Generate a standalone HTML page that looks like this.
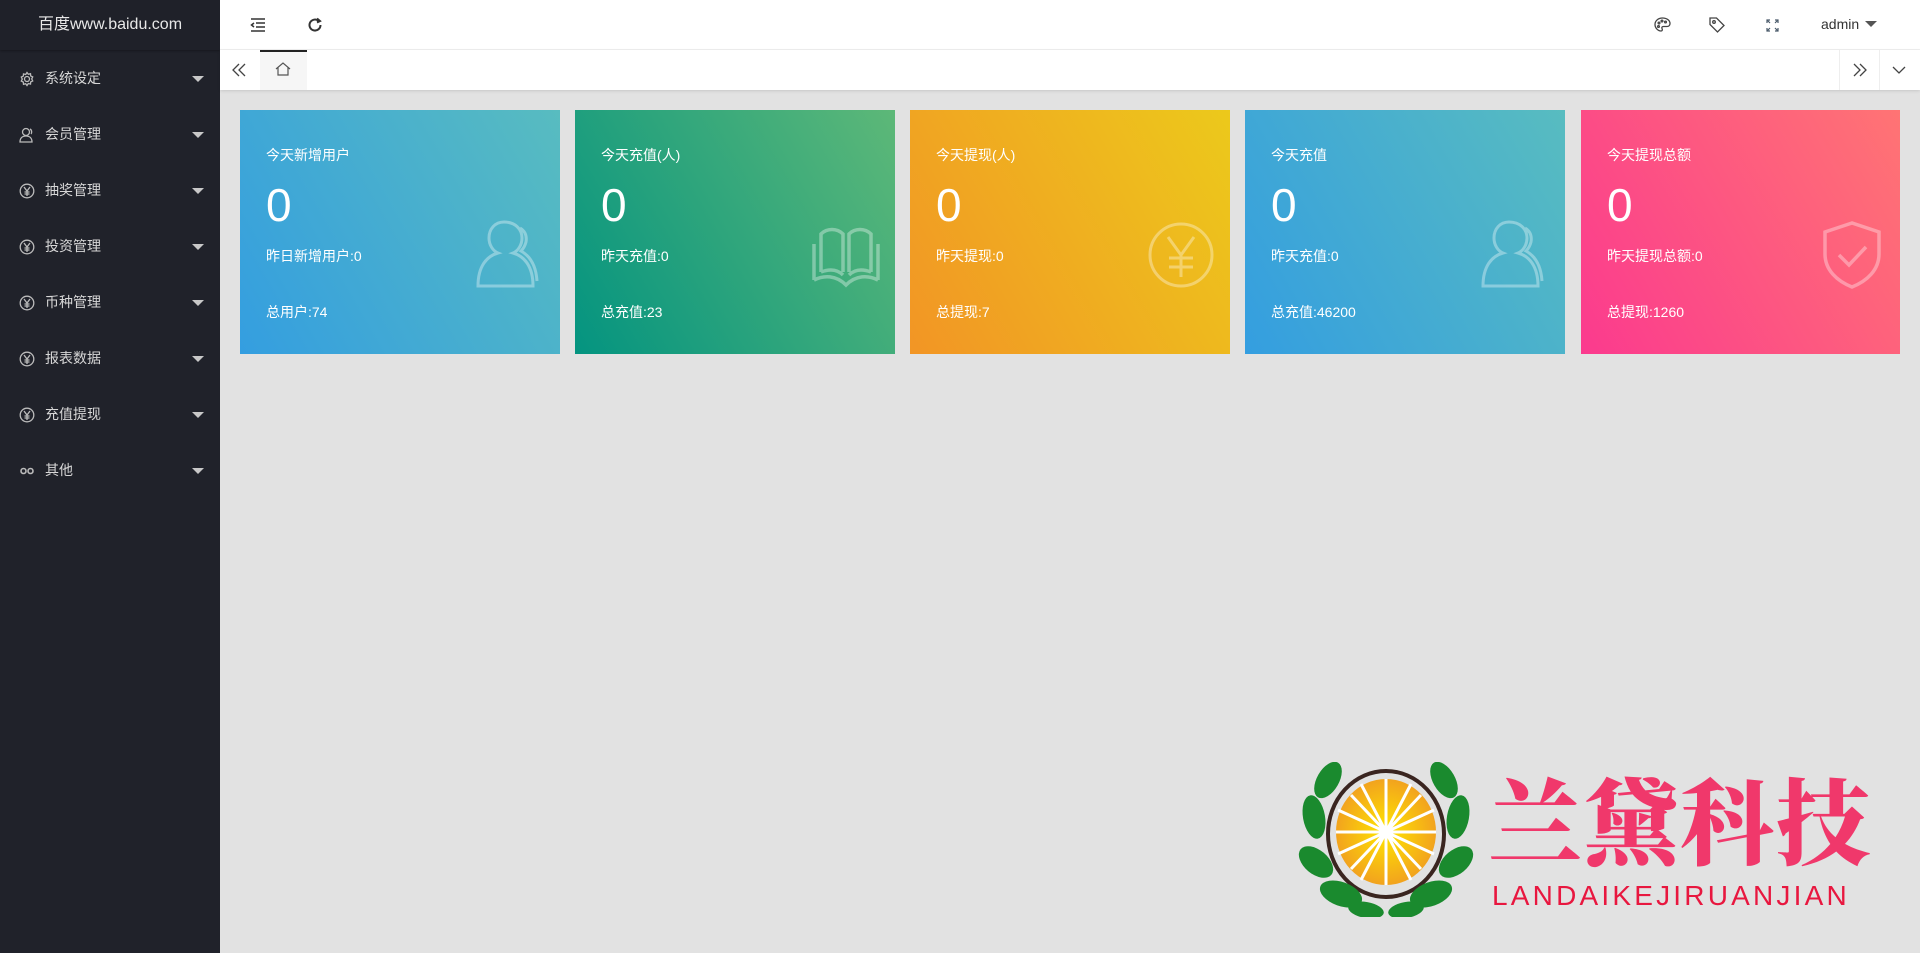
<!DOCTYPE html>
<html><head><meta charset="utf-8"><style>
*{margin:0;padding:0;box-sizing:border-box}
body{width:1920px;height:953px;overflow:hidden;background:#e2e2e2;font-family:"Liberation Sans","Noto Sans CJK SC",sans-serif;position:relative}
.side{position:absolute;left:0;top:0;width:220px;height:953px;background:#20222a}
.logo{height:50px;line-height:50px;text-align:center;color:#e8e8e8;font-size:16px;background:#1f2129;box-shadow:0 1px 2px rgba(0,0,0,.3)}
.menu{position:absolute;top:50px;left:0;width:220px}
.mi{height:56px;line-height:56px;color:#d7d7d7;font-size:14px;padding-left:45px;position:relative}
.mi svg{position:absolute;left:19px;top:21px}
.mi:after{content:"";position:absolute;right:16px;top:26px;border:6px solid transparent;border-top:6px solid #c8c8c8}
.head{position:absolute;left:220px;top:0;right:0;height:50px;background:#fff;border-bottom:1px solid #f0f0f0}
.tabs{position:absolute;left:220px;top:50px;right:0;height:40px;background:#fff;box-shadow:0 1px 3px rgba(0,0,0,.12)}
.card{position:absolute;top:110px;width:320px;height:244px;color:#fff;padding-left:26px}
.card .t{position:absolute;top:35px;font-size:14px}
.card .n{position:absolute;top:68px;font-size:46px}
.card .y{position:absolute;top:136px;font-size:14px}
.card .z{position:absolute;top:192px;font-size:14px}
.card svg{position:absolute;left:236px;top:110px}
</style></head><body>
<div class="side">
<div class="logo">百度www.baidu.com</div>
<div class="menu">
<div class="mi"><svg width="16" height="16" viewBox="0 0 16 16" fill="none" stroke="#bbb" stroke-width="1.3"><circle cx="8" cy="8" r="2.5"/><path d="M8 1.5l1.3 1.8 2.2-.6.2 2.2 2 1-1 2 1 2-2 1-.2 2.2-2.2-.6L8 14.5l-1.3-1.8-2.2.6-.2-2.2-2-1 1-2-1-2 2-1 .2-2.2 2.2.6z"/></svg>系统设定</div>
<div class="mi"><svg width="16" height="16" viewBox="0 0 16 16" fill="none" stroke="#bbb" stroke-width="1.3"><circle cx="7" cy="5" r="3.5"/><path d="M1 15c0-4 2.5-6 6-6s6 2 6 6z M11 2c2 1 2 4 1 5"/></svg>会员管理</div>
<div class="mi"><svg width="16" height="16" viewBox="0 0 16 16" fill="none" stroke="#bbb" stroke-width="1.3"><circle cx="8" cy="8" r="6.8"/><path d="M5 4l3 4 3-4M8 8v5M5.5 9h5M5.5 11h5"/></svg>抽奖管理</div>
<div class="mi"><svg width="16" height="16" viewBox="0 0 16 16" fill="none" stroke="#bbb" stroke-width="1.3"><circle cx="8" cy="8" r="6.8"/><path d="M5 4l3 4 3-4M8 8v5M5.5 9h5M5.5 11h5"/></svg>投资管理</div>
<div class="mi"><svg width="16" height="16" viewBox="0 0 16 16" fill="none" stroke="#bbb" stroke-width="1.3"><circle cx="8" cy="8" r="6.8"/><path d="M5 4l3 4 3-4M8 8v5M5.5 9h5M5.5 11h5"/></svg>币种管理</div>
<div class="mi"><svg width="16" height="16" viewBox="0 0 16 16" fill="none" stroke="#bbb" stroke-width="1.3"><circle cx="8" cy="8" r="6.8"/><path d="M5 4l3 4 3-4M8 8v5M5.5 9h5M5.5 11h5"/></svg>报表数据</div>
<div class="mi"><svg width="16" height="16" viewBox="0 0 16 16" fill="none" stroke="#bbb" stroke-width="1.3"><circle cx="8" cy="8" r="6.8"/><path d="M5 4l3 4 3-4M8 8v5M5.5 9h5M5.5 11h5"/></svg>充值提现</div>
<div class="mi"><svg width="16" height="16" viewBox="0 0 16 16" fill="none" stroke="#bbb" stroke-width="1.6"><circle cx="4.5" cy="8" r="2.5"/><circle cx="11.5" cy="8" r="2.5"/></svg>其他</div>
</div></div>
<div class="head">
<svg style="position:absolute;left:30px;top:18px" width="16" height="14" viewBox="0 0 16 14" fill="none" stroke="#333" stroke-width="1.5"><path d="M1 1h14M6 5h9M6 9h9M1 13h14M4 5L1.5 7 4 9"/></svg>
<svg style="position:absolute;left:87px;top:17px" width="16" height="16" viewBox="0 0 16 16" fill="none" stroke="#333" stroke-width="2"><path d="M13.5 8A5.5 5.5 0 1 1 11.5 3.8"/><path d="M10 1.5l3 2.5-3 1.5" fill="#333"/></svg>
<svg style="position:absolute;left:1434px;top:17px" width="17" height="15" viewBox="0 0 17 15" fill="none" stroke="#444" stroke-width="1.3"><path d="M8.5 1C4 1 1 4 1 7.5S4 14 7 14c1.5 0 1.5-1.5 1-2.5s0-2 1.5-2H13c2 0 3-1.5 3-3C16 3.5 13 1 8.5 1z"/><circle cx="5" cy="6" r=".9"/><circle cx="8" cy="4" r=".9"/><circle cx="11.5" cy="5" r=".9"/><circle cx="4.5" cy="9.5" r=".9"/></svg>
<svg style="position:absolute;left:1489px;top:17px" width="16" height="16" viewBox="0 0 16 16" fill="none" stroke="#444" stroke-width="1.3"><path d="M1 1h6.5L15 8.5 8.5 15 1 7.5z"/><circle cx="5" cy="5" r="1.3"/></svg>
<svg style="position:absolute;left:1546px;top:19px" width="13" height="13" viewBox="0 0 13 13" fill="none" stroke="#4a5a6a" stroke-width="1.2"><path d="M1 4V1h3M9 1h3v3M12 9v3H9M4 12H1V9M1 1l3 3M12 1L9 4M12 12L9 9M1 12l3-3"/></svg>
<div style="position:absolute;left:1601px;top:16px;font-size:14px;color:#333">admin</div>
<div style="position:absolute;left:1645px;top:21px;border:6px solid transparent;border-top:6px solid #555"></div>
</div>
<div class="tabs">
<svg style="position:absolute;left:12px;top:13px" width="14" height="14" viewBox="0 0 14 14" fill="none" stroke="#444" stroke-width="1.3"><path d="M7 1L1 7l6 6M13 1L7 7l6 6"/></svg>
<div style="position:absolute;left:40px;top:0;width:47px;height:40px;background:#f6f6f6;border-top:2px solid #222"></div>
<svg style="position:absolute;left:55px;top:12px" width="16" height="14" viewBox="0 0 16 14" fill="none" stroke="#555" stroke-width="1.2"><path d="M1 7L8 1l7 6M3 5.5V13h10V5.5"/></svg>
<div style="position:absolute;right:40px;top:0;width:1px;height:40px;background:#eee"></div>
<div style="position:absolute;right:80px;top:0;width:1px;height:40px;background:#eee"></div>
<svg style="position:absolute;right:53px;top:13px" width="14" height="14" viewBox="0 0 14 14" fill="none" stroke="#444" stroke-width="1.3"><path d="M1 1l6 6-6 6M7 1l6 6-6 6"/></svg>
<svg style="position:absolute;right:14px;top:16px" width="14" height="8" viewBox="0 0 14 8" fill="none" stroke="#444" stroke-width="1.3"><path d="M1 1l6 6 6-6"/></svg>
</div>

<div class="card" style="left:240px;background:linear-gradient(60deg,#349ee0,#58bcc0)"><div class="t">今天新增用户</div><div class="n">0</div><div class="y">昨日新增用户:0</div><div class="z">总用户:74</div>
<svg width="70" height="70" viewBox="0 0 70 70" fill="none" stroke="rgba(255,255,255,.35)" stroke-width="3"><path d="M28 2c-9 0-15 7-15 16 0 7 4 13 9 15C11 36 2 46 2 66h55c0-20-9-30-20-33 5-2 9-8 9-15 0-9-7-16-18-16zM44 8c5 3 7 8 6 14-1 4-3 7-5 9 9 5 15 15 16 30"/></svg></div>
<div class="card" style="left:575px;background:linear-gradient(60deg,#049480,#5db878)"><div class="t">今天充值(人)</div><div class="n">0</div><div class="y">昨天充值:0</div><div class="z">总充值:23</div>
<svg width="70" height="70" viewBox="0 0 70 70" fill="none" stroke="rgba(255,255,255,.35)" stroke-width="3.5"><path d="M3 24v36M67 24v36M10 52V14c6-6 16-6 22 0v38M60 52V14c-6-6-16-6-22 0v38M3 60c10-5 22-5 32 5 10-10 22-10 32-5M10 52c8-3 16-3 22 3M60 52c-8-3-16-3-22 3"/></svg></div>
<div class="card" style="left:910px;background:linear-gradient(60deg,#f29525,#ecc91b)"><div class="t">今天提现(人)</div><div class="n">0</div><div class="y">昨天提现:0</div><div class="z">总提现:7</div>
<svg width="70" height="70" viewBox="0 0 70 70" fill="none" stroke="rgba(255,255,255,.35)" stroke-width="3"><circle cx="35" cy="35" r="31"/><path d="M22 17l13 18 13-18M35 35v22M23 38h24M23 47h24"/></svg></div>
<div class="card" style="left:1245px;background:linear-gradient(60deg,#349ee0,#58bcc0)"><div class="t">今天充值</div><div class="n">0</div><div class="y">昨天充值:0</div><div class="z">总充值:46200</div>
<svg width="70" height="70" viewBox="0 0 70 70" fill="none" stroke="rgba(255,255,255,.35)" stroke-width="3"><path d="M28 2c-9 0-15 7-15 16 0 7 4 13 9 15C11 36 2 46 2 66h55c0-20-9-30-20-33 5-2 9-8 9-15 0-9-7-16-18-16zM44 8c5 3 7 8 6 14-1 4-3 7-5 9 9 5 15 15 16 30"/></svg></div>
<div class="card" style="left:1581px;width:319px;background:linear-gradient(60deg,#fb3a8e,#ff7474)"><div class="t">今天提现总额</div><div class="n">0</div><div class="y">昨天提现总额:0</div><div class="z">总提现:1260</div>
<svg width="70" height="70" viewBox="0 0 70 70" fill="none" stroke="rgba(255,255,255,.35)" stroke-width="3.5"><path d="M35 3L8 12v22c0 16 12 27 27 33 15-6 27-17 27-33V12z"/><path d="M22 35l10 10 17-18"/></svg></div>

<svg style="position:absolute;left:1296px;top:762px" width="180" height="155" viewBox="0 0 180 155">
<ellipse cx="90" cy="72" rx="58" ry="63" fill="none" stroke="#3a2520" stroke-width="4"/>
<defs><radialGradient id="g"><stop offset="0" stop-color="#ffe600"/><stop offset="1" stop-color="#f2a31e"/></radialGradient></defs>
<ellipse cx="90" cy="70" rx="50" ry="53" fill="url(#g)"/>
<g stroke="#fff" stroke-width="3"><path d="M90 17v106M40 70h100M55 33l70 74M125 33L55 107M65 22l50 96M115 22L65 118M42 48l96 44M138 48L42 92"/></g>
<g fill="#1a8a2e"><ellipse cx="32" cy="18" rx="11" ry="20" transform="rotate(30 32 18)"/><ellipse cx="148" cy="18" rx="11" ry="20" transform="rotate(-30 148 18)"/><ellipse cx="18" cy="55" rx="11" ry="22" transform="rotate(-10 18 55)"/><ellipse cx="162" cy="55" rx="11" ry="22" transform="rotate(10 162 55)"/><ellipse cx="20" cy="100" rx="12" ry="20" transform="rotate(-50 20 100)"/><ellipse cx="160" cy="100" rx="12" ry="20" transform="rotate(50 160 100)"/><ellipse cx="45" cy="132" rx="12" ry="22" transform="rotate(-70 45 132)"/><ellipse cx="135" cy="132" rx="12" ry="22" transform="rotate(70 135 132)"/><ellipse cx="70" cy="148" rx="8" ry="18" transform="rotate(-80 70 148)"/><ellipse cx="110" cy="148" rx="8" ry="18" transform="rotate(80 110 148)"/></g>
</svg>
<div style="position:absolute;left:1488px;top:762px;font-family:'Noto Serif CJK SC',serif;font-weight:900;font-size:94px;color:#f0386b;letter-spacing:2px;line-height:110px">兰黛科技</div>
<div style="position:absolute;left:1492px;top:880px;font-size:28px;color:#e8173f;letter-spacing:3.2px">LANDAIKEJIRUANJIAN</div>
</body></html>
